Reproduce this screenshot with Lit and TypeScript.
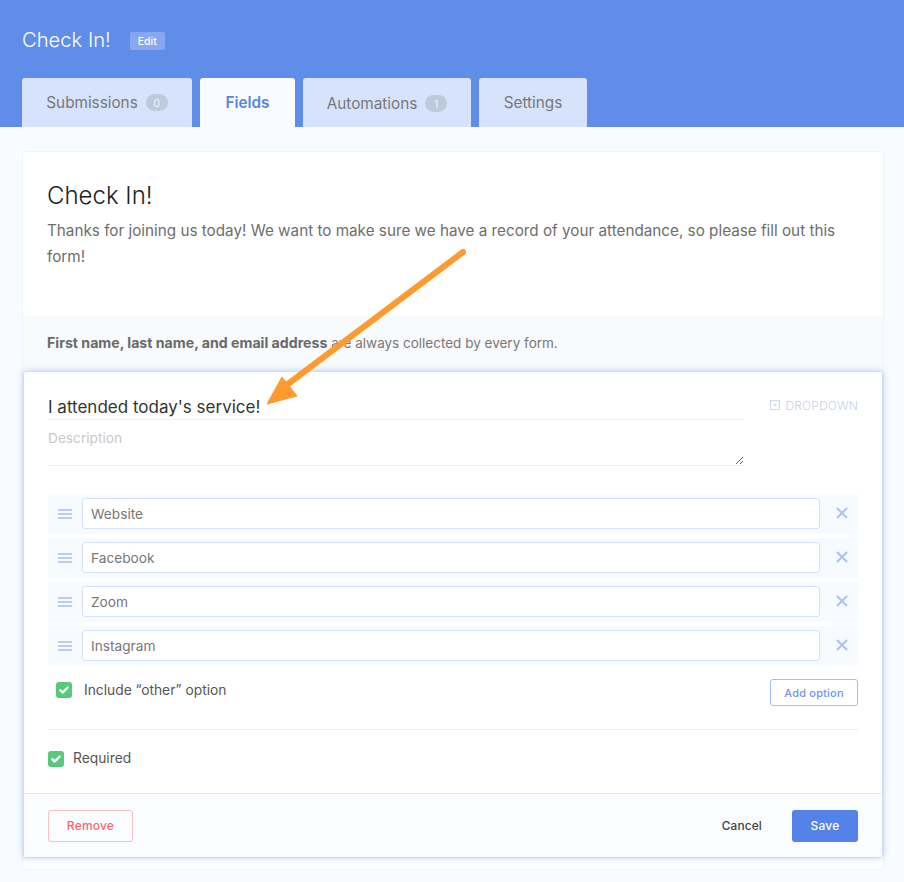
import {html, css, LitElement, svg} from 'lit';
import {customElement} from 'lit/decorators.js';

const OPTIONS = ['Website', 'Facebook', 'Zoom', 'Instagram'];

const check = html`<span class="check"><svg width="10" height="8" viewBox="0 0 10 8"><path d="M1.3 4.2 L3.8 6.5 L8.7 1.5" fill="none" stroke="#fff" stroke-width="2.4" stroke-linecap="round" stroke-linejoin="round"/></svg></span>`;

const arrow = svg`<path d="M463 252 L280 390" stroke="#ff9a2e" stroke-width="6" stroke-linecap="round" fill="none"/><path d="M267 404 L282 377 L297 396 Z" fill="#ff9a2e" stroke="#ff9a2e" stroke-width="1" stroke-linejoin="round"/>`;

@customElement('app-root')
export class AppRoot extends LitElement {
  static styles = css`
    :host {
      display: block;
      position: relative;
      height: 882px;
      overflow: hidden;
      background: #f8fbff;
      font-family: Inter, "Liberation Sans", sans-serif;
      color: #6e6e6e;
    }

    .header {
      height: 127px;
      box-sizing: border-box;
      background: #608de7;
      padding: 27px 22px 0;
      display: flex;
      flex-direction: column;
    }

    .title-row {
      display: flex;
      align-items: center;
      height: 25px;
      gap: 19px;
    }

    .title-row h1 {
      margin: 0;
      font-size: 20.2px;
      font-weight: 300;
      color: #fff;
      line-height: 25px;
    }

    .edit {
      width: 35px;
      height: 18px;
      margin-top: 3px;
      border-radius: 2px;
      background: #87a8ec;
      color: #fff;
      font-size: 10.5px;
      font-weight: 500;
      display: flex;
      align-items: center;
      justify-content: center;
    }

    .tabs {
      display: flex;
      gap: 8px;
      margin-top: 26px;
    }

    .tab {
      height: 49px;
      box-sizing: border-box;
      border-radius: 3px 3px 0 0;
      background: #d7e3fa;
      font-size: 15.3px;
      color: #77787c;
      display: flex;
      align-items: center;
      justify-content: center;
      gap: 8px;
    }

    .tab.low {
      padding-top: 2px;
    }

    .tab.active {
      background: #f8fbff;
      color: #5585e6;
      font-weight: 600;
    }

    .badge {
      width: 22px;
      height: 17px;
      border-radius: 9px;
      background: #bdc9dc;
      color: #eef2f8;
      font-size: 11px;
      display: flex;
      align-items: center;
      justify-content: center;
    }

    .sheet {
      margin: 24px 20px 0 22px;
      height: 719px;
      box-sizing: border-box;
      background: #fff;
      border: 1px solid #f0f3f8;
      border-radius: 3px;
      display: flex;
      flex-direction: column;
    }

    .intro {
      height: 164px;
      box-sizing: border-box;
      padding: 28px 24px 0;
    }

    .intro h2 {
      margin: 0;
      font-size: 24px;
      font-weight: 300;
      line-height: 32px;
      color: #222;
    }

    .intro p {
      margin: 6px 0 0;
      font-size: 15.25px;
      line-height: 26px;
      color: #6e6e6e;
    }

    .notice {
      height: 55px;
      box-sizing: border-box;
      padding: 18px 24px 0;
      background: #f9fafc;
      font-size: 13.5px;
      line-height: 18px;
      color: #777;
    }

    .notice b {
      font-size: 14.15px;
      font-weight: 700;
      color: #6a6a6a;
    }

    .editor {
      height: 487px;
      box-sizing: border-box;
      background: #fff;
      border: 1px solid #cfdcf8;
      border-radius: 3px;
      box-shadow: 0 0 6px rgba(96, 141, 231, 0.4);
      display: flex;
      flex-direction: column;
    }

    .editor-top {
      flex: 1;
      padding: 0 24px;
    }

    .heading {
      display: flex;
      justify-content: space-between;
    }

    .fields {
      width: 696px;
    }

    .name {
      height: 48px;
      box-sizing: border-box;
      padding-top: 23px;
      border-bottom: 1px solid #eff1f5;
      font-size: 17px;
      line-height: 24px;
      color: #333;
    }

    textarea {
      display: block;
      width: 100%;
      height: 46px;
      box-sizing: border-box;
      margin: 0;
      padding: 9px 0 0;
      border: 0;
      border-bottom: 1px solid #eff1f5;
      outline: none;
      font: 13.7px/18px Inter, "Liberation Sans", sans-serif;
      color: #333;
    }

    textarea::placeholder {
      color: #c9c9c9;
    }

    .type {
      margin-top: 25px;
      height: 16px;
      display: flex;
      align-items: center;
      gap: 5px;
      font-size: 12px;
      font-weight: 300;
      letter-spacing: 0.15px;
      color: #c6d0e6;
    }

    .options {
      margin-top: 28px;
      display: flex;
      flex-direction: column;
      gap: 4px;
    }

    .option {
      height: 40px;
      box-sizing: border-box;
      padding-top: 4px;
      background: #f7faff;
      display: flex;
      align-items: flex-start;
    }

    .grip {
      width: 34px;
      height: 31px;
      display: flex;
      align-items: center;
      justify-content: center;
    }

    .field {
      width: 738px;
      height: 31px;
      box-sizing: border-box;
      padding: 1px 0 0 8px;
      background: #fff;
      border: 1px solid #d8e2f5;
      border-radius: 3px;
      font-size: 13.7px;
      line-height: 29px;
      color: #777;
    }

    .remove-x {
      flex: 1;
      height: 30px;
      padding-left: 6px;
      display: flex;
      align-items: center;
      justify-content: center;
    }

    .other {
      height: 48px;
      padding-left: 8px;
      display: flex;
      align-items: center;
      justify-content: space-between;
    }

    .toggle {
      display: flex;
      align-items: center;
      font-size: 13.8px;
      color: #555;
    }

    .toggle .check {
      margin-right: 12px;
    }

    .required .label {
      padding-bottom: 2px;
    }

    .check {
      width: 16px;
      height: 16px;
      border-radius: 3px;
      background: #55ca7d;
      display: flex;
      align-items: center;
      justify-content: center;
    }

    .required {
      border-top: 1px solid #eceef2;
      margin-top: 15px;
      padding-top: 20px;
    }

    .required .check {
      margin-right: 9px;
    }

    .btn {
      box-sizing: border-box;
      border-radius: 3px;
      font-size: 12px;
      font-weight: 500;
      letter-spacing: 0.2px;
      display: flex;
      align-items: center;
      justify-content: center;
    }

    .add {
      width: 88px;
      height: 27px;
      margin-top: 5px;
      background: #fff;
      border: 1px solid #a3bdf2;
      color: #6f96ea;
      font-size: 11px;
    }

    .footer {
      height: 64px;
      box-sizing: border-box;
      padding: 16px 24px 0;
      border-top: 1px solid #e2e8f4;
      background: #fbfcff;
      display: flex;
      justify-content: space-between;
    }

    .footer .btn {
      padding-bottom: 2px;
    }

    .remove {
      width: 85px;
      height: 32px;
      border: 1px solid #f4c0c0;
      color: #f86a6a;
    }

    .actions {
      display: flex;
      align-items: flex-start;
      gap: 30px;
    }

    .footer .cancel {
      height: 32px;
      padding-bottom: 0;
      font-size: 11.8px;
      color: #3d3d3d;
    }

    .save {
      width: 66px;
      height: 32px;
      background: #5482e8;
      color: #fff;
    }

    .annotation {
      position: absolute;
      left: 0;
      top: 0;
      pointer-events: none;
    }
  `;

  _tab(label: string, width: number, count?: string, classes = '') {
    return html`<div class="tab ${classes}" style="width:${width}px">
      ${label}${count ? html`<span class="badge">${count}</span>` : ''}
    </div>`;
  }

  _option(label: string) {
    return html`<div class="option">
      <div class="grip">
        <svg width="14" height="10" viewBox="0 0 14 10"><path d="M0 1h14M0 5h14M0 9h14" stroke="#a6bdec" stroke-width="1.4"/></svg>
      </div>
      <div class="field">${label}</div>
      <div class="remove-x">
        <svg width="12" height="12" viewBox="0 0 12 12"><path d="M1 1 L11 11 M11 1 L1 11" stroke="#aac2f2" stroke-width="2"/></svg>
      </div>
    </div>`;
  }

  render() {
    return html`
      <div class="header">
        <div class="title-row">
          <h1>Check In!</h1>
          <span class="edit">Edit</span>
        </div>
        <div class="tabs">
          ${this._tab('Submissions', 170, '0')}
          ${this._tab('Fields', 95, undefined, 'active')}
          ${this._tab('Automations', 168, '1', 'low')}
          ${this._tab('Settings', 108)}
        </div>
      </div>
      <div class="sheet">
        <div class="intro">
          <h2>Check In!</h2>
          <p>Thanks for joining us today! We want to make sure we have a record of your attendance, so please fill out this form!</p>
        </div>
        <div class="notice"><b>First name, last name, and email address</b> are always collected by every form.</div>
        <div class="editor">
          <div class="editor-top">
            <div class="heading">
              <div class="fields">
                <div class="name">I attended today's service!</div>
                <textarea placeholder="Description"></textarea>
              </div>
              <div class="type">
                <svg width="10" height="10" viewBox="0 0 10 10"><rect x="0.5" y="0.5" width="9" height="9" fill="none" stroke="#cfd8ea"/><path d="M3 4 H7 L5 6.5 Z" fill="#cfd8ea"/></svg>
                DROPDOWN
              </div>
            </div>
            <div class="options">${OPTIONS.map((o) => this._option(o))}</div>
            <div class="other">
              <div class="toggle">${check}<span class="label">Include “other” option</span></div>
              <div class="btn add">Add option</div>
            </div>
            <div class="toggle required">${check}<span class="label">Required</span></div>
          </div>
          <div class="footer">
            <div class="btn remove">Remove</div>
            <div class="actions">
              <div class="btn cancel">Cancel</div>
              <div class="btn save">Save</div>
            </div>
          </div>
        </div>
      </div>
      <svg class="annotation" width="904" height="882">${arrow}</svg>
    `;
  }
}
